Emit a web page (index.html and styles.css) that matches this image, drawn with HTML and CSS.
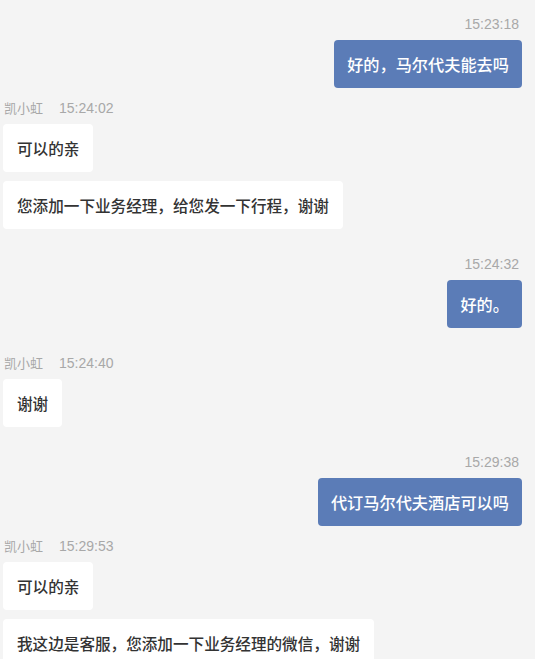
FILE: index.html
```html
<!DOCTYPE html>
<html lang="zh-CN">
<head>
  <meta charset="UTF-8">
  <meta name="viewport" content="width=device-width, initial-scale=1.0">
  <title>聊天记录</title>
  <link rel="stylesheet" href="styles.css">
</head>
<body>
  <div class="chat">
    <div class="group mine first">
      <div class="meta"><span class="time">15:23:18</span></div>
      <div class="bubble">好的，马尔代夫能去吗</div>
    </div>

    <div class="group near">
      <div class="meta"><span class="name">凯小虹</span><span class="time">15:24:02</span></div>
      <div class="bubble">可以的亲</div>
      <div class="bubble">您添加一下业务经理，给您发一下行程，谢谢</div>
    </div>

    <div class="group mine">
      <div class="meta"><span class="time">15:24:32</span></div>
      <div class="bubble">好的。</div>
    </div>

    <div class="group">
      <div class="meta"><span class="name">凯小虹</span><span class="time">15:24:40</span></div>
      <div class="bubble">谢谢</div>
    </div>

    <div class="group mine">
      <div class="meta"><span class="time">15:29:38</span></div>
      <div class="bubble">代订马尔代夫酒店可以吗</div>
    </div>

    <div class="group near">
      <div class="meta"><span class="name">凯小虹</span><span class="time">15:29:53</span></div>
      <div class="bubble">可以的亲</div>
      <div class="bubble">我这边是客服，您添加一下业务经理的微信，谢谢</div>
    </div>
  </div>
</body>
</html>
```

FILE: styles.css
```css
body {
  margin: 0;
  background-color: #f4f4f4;
  font-family: "Liberation Sans", "Noto Sans CJK SC", sans-serif;
  overflow: hidden;
}
.chat {
  display: flex;
  flex-direction: column;
  padding: 16px 13px 0 3px;
}
.group {
  display: flex;
  flex-direction: column;
  align-items: flex-start;
  gap: 9px;
  margin-top: 27px;
}
.group.near {
  margin-top: 12px;
}
.group.first {
  margin-top: 0;
}
.group.mine {
  align-items: flex-end;
}
.meta {
  display: flex;
  align-items: baseline;
  gap: 16px;
  font-size: 14px;
  line-height: 16px;
  color: #a8a8a8;
  margin-bottom: -1px;
  padding-left: 1px;
}
.group.mine .meta {
  padding: 0 3px 0 0;
}
.name {
  font-family: "Noto Sans CJK SC", sans-serif;
  font-size: 13px;
}
.bubble {
  padding: 14px;
  font-family: "Noto Sans CJK SC", sans-serif;
  font-size: 15.6px;
  font-weight: 500;
  line-height: 20px;
  color: #333;
  background-color: #fff;
  border-radius: 4px;
  white-space: nowrap;
}
.group.mine .bubble {
  padding: 14px 13px;
  font-size: 16.2px;
  background-color: #5b7cb7;
  color: #fff;
}
```
